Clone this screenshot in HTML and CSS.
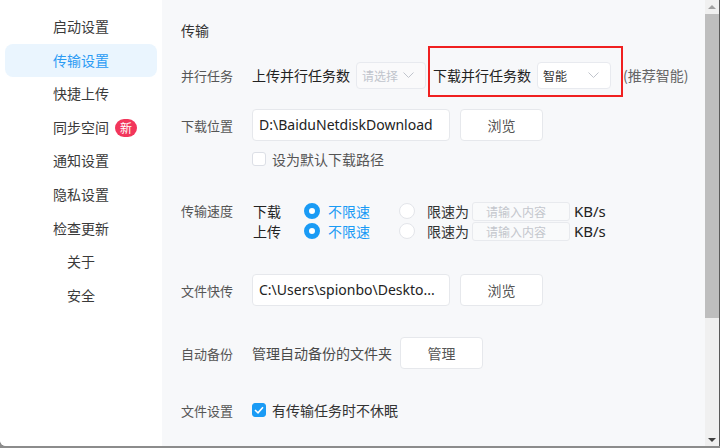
FILE: index.html
```html
<!DOCTYPE html>
<html lang="zh-CN">
<head>
  <meta charset="UTF-8">
  <title>设置</title>
  <link rel="stylesheet" href="styles.css">
</head>
<body>
  <div class="app">
    <!-- Sidebar -->
    <nav class="sidebar">
      <a class="nav-item">启动设置</a>
      <a class="nav-item active">传输设置</a>
      <a class="nav-item">快捷上传</a>
      <a class="nav-item">同步空间<span class="badge">新</span></a>
      <a class="nav-item">通知设置</a>
      <a class="nav-item">隐私设置</a>
      <a class="nav-item">检查更新</a>
      <a class="nav-item">关于</a>
      <a class="nav-item">安全</a>
    </nav>

    <!-- Settings -->
    <main class="content">
      <h2 class="section-title">传输</h2>

      <div class="row row-parallel">
        <span class="label">并行任务</span>
        <div class="field">
          <span class="field-text">上传并行任务数</span>
          <div class="select select-upload">
            <span class="placeholder">请选择</span>
            <svg class="chevron" width="11" height="6" viewBox="0 0 11 6"><path d="M0.5 0.5 L5.5 5.5 L10.5 0.5" fill="none" stroke="#c0c4cc" stroke-width="1"/></svg>
          </div>
          <div class="highlight">
            <span class="field-text">下载并行任务数</span>
            <div class="select select-download">
              <span class="value">智能</span>
              <svg class="chevron" width="11" height="6" viewBox="0 0 11 6"><path d="M0.5 0.5 L5.5 5.5 L10.5 0.5" fill="none" stroke="#c0c4cc" stroke-width="1"/></svg>
            </div>
          </div>
          <span class="hint">(推荐智能)</span>
        </div>
      </div>

      <div class="row row-path">
        <span class="label">下载位置</span>
        <div class="field">
          <div class="input path">D:\BaiduNetdiskDownload</div>
          <button class="btn">浏览</button>
        </div>
      </div>
      <div class="row row-check">
        <span class="label"></span>
        <label class="check"><span class="box"></span>设为默认下载路径</label>
      </div>

      <div class="row row-speed">
        <span class="label">传输速度</span>
        <div class="speed">
          <span class="dir">下载</span>
          <span class="radio-opt on"><span class="radio"></span>不限速</span>
          <span class="radio-opt"><span class="radio"></span>限速为</span>
          <span class="small-input">请输入内容</span>
          <span class="unit">KB/s</span>

          <span class="dir">上传</span>
          <span class="radio-opt on"><span class="radio"></span>不限速</span>
          <span class="radio-opt"><span class="radio"></span>限速为</span>
          <span class="small-input">请输入内容</span>
          <span class="unit">KB/s</span>
        </div>
      </div>

      <div class="row row-quick">
        <span class="label">文件快传</span>
        <div class="field">
          <div class="input path">C:\Users\spionbo\Deskto...</div>
          <button class="btn">浏览</button>
        </div>
      </div>

      <div class="row row-backup">
        <span class="label">自动备份</span>
        <div class="field">
          <span class="field-text muted">管理自动备份的文件夹</span>
          <button class="btn btn-manage">管理</button>
        </div>
      </div>

      <div class="row row-file">
        <span class="label">文件设置</span>
        <label class="check checked">
          <span class="box"><svg width="10" height="8" viewBox="0 0 10 8"><path d="M1 4 L4 6.8 L9 1.2" fill="none" stroke="#fff" stroke-width="1.6"/></svg></span>有传输任务时不休眠
        </label>
      </div>
    </main>

    <!-- Scrollbar -->
    <div class="scrollbar">
      <span class="arrow up"></span>
      <span class="thumb"></span>
      <span class="arrow down"></span>
    </div>
  </div>
</body>
</html>
```

FILE: styles.css
```css
/* General */
html, body {
  margin: 0;
  padding: 0;
  height: 448px;
  overflow: hidden;
  background: #8c8c8c;
}

body {
  font-family: "Noto Sans", "Noto Sans CJK SC", sans-serif;
  font-size: 14px;
  color: #333;
}

.app {
  display: flex;
  height: 446px;
  background: #fff;
  border-bottom-left-radius: 6px;
  overflow: hidden;
}

/* Sidebar */
.sidebar {
  width: 162px;
  flex: none;
  background: #fff;
  padding-top: 10px;
  box-sizing: border-box;
}

.nav-item {
  position: relative;
  display: block;
  height: 33.6px;
  line-height: 33.6px;
  margin: 0 5px;
  text-align: center;
  font-family: "Noto Sans CJK SC", sans-serif;
  font-size: 14px;
  color: #3a3a3a;
  border-radius: 8px;
}

.nav-item.active {
  background: #eaf5fe;
  color: #2b9bf4;
}

.badge {
  position: absolute;
  left: 110px;
  top: 8px;
  width: 22px;
  height: 18px;
  line-height: 18px;
  border-radius: 9px;
  background: #f2365b;
  color: #fff;
  font-size: 12px;
  text-align: center;
}

/* Content */
.content {
  flex: 1;
  background: #f7f8fa;
  padding: 20px 0 0 19px;
}

.section-title {
  margin: 0;
  font-size: 14px;
  font-weight: normal;
  line-height: 20px;
  color: #333;
  font-family: "Noto Sans CJK SC", sans-serif;
}

.row {
  display: flex;
  align-items: center;
}

.label {
  width: 71px;
  flex: none;
  font-family: "Noto Sans CJK SC", sans-serif;
  font-size: 13px;
  color: #555;
}

.field {
  display: flex;
  align-items: center;
}

.field-text {
  font-family: "Noto Sans CJK SC", sans-serif;
  font-size: 14px;
  color: #222;
}

.field-text.muted {
  color: #4a4a4a;
}

/* Selects */
.select {
  display: flex;
  align-items: center;
  justify-content: space-between;
  height: 27px;
  box-sizing: border-box;
  border: 1px solid #e8eaef;
  border-radius: 4px;
  background: #fff;
  padding: 0 11px 0 5px;
  margin-left: 6px;
  font-family: "Noto Sans CJK SC", sans-serif;
  font-size: 12px;
}

.select-upload {
  width: 70px;
  background: #fafafb;
}

.select-download {
  width: 74px;
}

.placeholder {
  color: #c0c4cc;
}

.value {
  color: #333;
}

.highlight {
  display: flex;
  align-items: center;
  border: 2px solid #f02020;
  padding: 14px 10px 6px 3px;
  margin: -16px 0 -8px 2px;
}

.hint {
  margin-left: 0;
  font-family: "Noto Sans CJK SC", sans-serif;
  color: #666;
}

.row-parallel { margin-top: 21px; height: 28px; }
.row-path { margin-top: 20px; }
.row-check { margin-top: 8px; }
.row-speed { margin-top: 32px; align-items: flex-start; }
.row-quick { margin-top: 33px; }
.row-backup { margin-top: 31px; }
.row-file { margin-top: 31px; }

.row-speed .label { line-height: 20px; }

/* Inputs and buttons */
.input {
  width: 198px;
  height: 32px;
  line-height: 30px;
  box-sizing: border-box;
  border: 1px solid #e6e8ec;
  border-radius: 4px;
  background: #fff;
  padding-left: 6px;
  font-size: 14px;
  color: #222;
  white-space: nowrap;
  overflow: hidden;
}

.btn {
  width: 83px;
  height: 32px;
  margin-left: 10px;
  border: 1px solid #e6e8ec;
  border-radius: 4px;
  background: #fff;
  font-family: "Noto Sans CJK SC", sans-serif;
  font-size: 14px;
  color: #555;
  padding: 0;
}

.btn-manage {
  margin-left: 8px;
}

/* Checkbox */
.check {
  display: flex;
  align-items: center;
  line-height: 20px;
  font-family: "Noto Sans CJK SC", sans-serif;
  font-size: 14px;
  color: #555;
}

.check .box {
  width: 14px;
  height: 14px;
  box-sizing: border-box;
  border: 1px solid #dcdfe6;
  border-radius: 3px;
  background: #fff;
  margin-right: 6px;
  display: flex;
  align-items: center;
  justify-content: center;
}

.check.checked {
  color: #333;
}

.check.checked .box {
  background: #1a9bf5;
  border-color: #1a9bf5;
}

/* Speed */
.speed {
  display: grid;
  grid-template-columns: 52px 95px 73px 102px auto;
  grid-auto-rows: 20px;
  align-items: center;
  font-family: "Noto Sans CJK SC", sans-serif;
  font-size: 14px;
}

.dir {
  color: #222;
  padding-left: 1px;
}

.radio-opt {
  display: flex;
  align-items: center;
  color: #333;
}

.radio {
  width: 16px;
  height: 16px;
  box-sizing: border-box;
  border: 1px solid #e3e5ea;
  border-radius: 50%;
  background: #fff;
  margin-right: 12px;
}

.radio-opt.on {
  color: #1a9bf5;
}

.radio-opt.on .radio {
  border: 5px solid #1a9bf5;
  margin-right: 8px;
}

.small-input {
  width: 98px;
  height: 19px;
  line-height: 17px;
  box-sizing: border-box;
  border: 1px solid #e8eaee;
  border-radius: 3px;
  background: #f9fafb;
  padding-left: 13px;
  font-size: 12px;
  color: #c4c7cd;
}

.unit {
  font-family: "Noto Sans", sans-serif;
  font-size: 15px;
  color: #222;
}

/* Scrollbar */
.scrollbar {
  width: 14px;
  flex: none;
  background: #f0f0f0;
  border-right: 1px solid #5a5a5a;
  display: flex;
  flex-direction: column;
  align-items: center;
}

.thumb {
  width: 100%;
  height: 304px;
  background: #bebebe;
}

.arrow {
  width: 0;
  height: 0;
  border-left: 4px solid transparent;
  border-right: 4px solid transparent;
}

.arrow.up {
  margin: 5px 0 5px;
  border-bottom: 4px solid #a0a0a0;
}

.arrow.down {
  margin-top: auto;
  margin-bottom: 4px;
  border-top: 4px solid #404040;
}
```
